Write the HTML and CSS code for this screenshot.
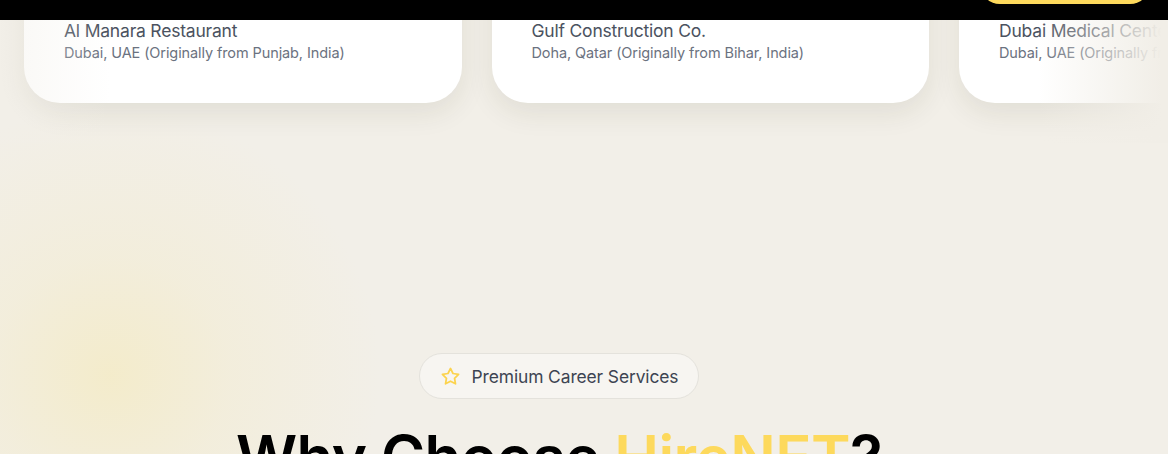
FILE: index.html
```html
<!DOCTYPE html>
<html lang="en">
<head>
<meta charset="utf-8">
<title>HireNET</title>
<link rel="stylesheet" href="styles.css">
</head>
<body>
<header class="topbar">
  <a class="cta" href="#">Get Started</a>
</header>
<main class="page">
  <section class="carousel">
    <div class="track">
      <article class="card">
        <h3 class="card-name">Al Manara Restaurant</h3>
        <p class="card-place">Dubai, UAE (Originally from Punjab, India)</p>
      </article>
      <article class="card">
        <h3 class="card-name">Gulf Construction Co.</h3>
        <p class="card-place">Doha, Qatar (Originally from Bihar, India)</p>
      </article>
      <article class="card">
        <h3 class="card-name">Dubai Medical Center</h3>
        <p class="card-place">Dubai, UAE (Originally from Kerala, India)</p>
      </article>
    </div>
  </section>
  <section class="why">
    <div class="badge">
      <svg class="star" viewBox="0 0 24 24" width="21" height="21" fill="none" stroke="#fcd34d" stroke-width="2" stroke-linejoin="round"><path d="M12 2.8l2.85 5.78 6.38.93-4.62 4.5 1.09 6.35L12 17.36l-5.7 3 1.09-6.35-4.62-4.5 6.38-.93z"/></svg>
      <span>Premium Career Services</span>
    </div>
    <h2 class="why-title">Why Choose <span class="accent">HireNET</span>?</h2>
  </section>
</main>
</body>
</html>
```
FILE: styles.css
```css
* { box-sizing: border-box; }
html, body { margin: 0; padding: 0; }
body {
  font-family: Inter, "Noto Sans", "Liberation Sans", sans-serif;
  background: #f2efe8;
  overflow: hidden;
  height: 454px;
}
.topbar {
  position: fixed;
  top: 0; left: 0; right: 0;
  height: 20px;
  background: #000;
  z-index: 10;
  display: flex;
  justify-content: flex-end;
  align-items: flex-end;
  padding: 0 18px 16px 0;
}
.cta {
  display: block;
  width: 170px;
  height: 40px;
  border-radius: 20px;
  background: #fdd95c;
  color: #111;
  text-decoration: none;
  font-weight: 600;
  font-size: 15px;
  line-height: 40px;
  text-align: center;
}
.page {
  position: relative;
  min-height: 454px;
  background:
    radial-gradient(circle at 110px 405px, rgba(244, 235, 198, 0.85) 0, rgba(243, 236, 208, 0.5) 120px, rgba(242, 239, 232, 0) 270px),
    #f2efe8;
}
.carousel {
  position: relative;
  overflow: hidden;
  margin-top: -30px;
  padding-bottom: 40px;
}
.carousel::before,
.carousel::after {
  content: "";
  position: absolute;
  top: 0; bottom: 0;
  z-index: 2;
  pointer-events: none;
}
.carousel::before {
  left: 0;
  width: 110px;
  background: linear-gradient(to right, rgba(242, 239, 232, 0.45), rgba(242, 239, 232, 0));
}
.carousel::after {
  right: 0;
  width: 130px;
  background: linear-gradient(to left, rgba(241, 238, 231, 1) 5%, rgba(241, 238, 231, 0));
}
.track {
  display: flex;
  gap: 30px;
  padding-left: 24px;
}
.card {
  flex: 0 0 437.5px;
  background: #fff;
  border-radius: 0 0 36px 36px;
  padding: 49px 40px 40px;
  box-shadow: 0 10px 28px rgba(60, 50, 20, 0.09);
}
.card-name {
  margin: 0;
  font-size: 17.5px;
  line-height: 24px;
  font-weight: 400;
  color: #4b5260;
  letter-spacing: -0.2px;
  white-space: nowrap;
}
.card-place {
  margin: 0;
  font-size: 14.5px;
  line-height: 20px;
  color: #6b7280;
  letter-spacing: -0.1px;
  white-space: nowrap;
}
.why {
  display: flex;
  flex-direction: column;
  align-items: center;
  padding-top: 210px;
  padding-right: 50px;
}
.badge {
  display: flex;
  align-items: center;
  gap: 11px;
  height: 46px;
  padding: 0 20px 0 20px;
  border-radius: 23px;
  border: 1px solid #e4e2dc;
  background: rgba(247, 246, 243, 0.8);
  font-size: 17.4px;
  color: #3d4452;
  letter-spacing: -0.1px;
}
.star { display: block; }
.why-title {
  margin: 25px 0 0;
  font-size: 60px;
  line-height: 1.1;
  font-weight: 600;
  color: #000;
  letter-spacing: -0.6px;
  white-space: nowrap;
}
.accent { color: #fdd95c; }
```
